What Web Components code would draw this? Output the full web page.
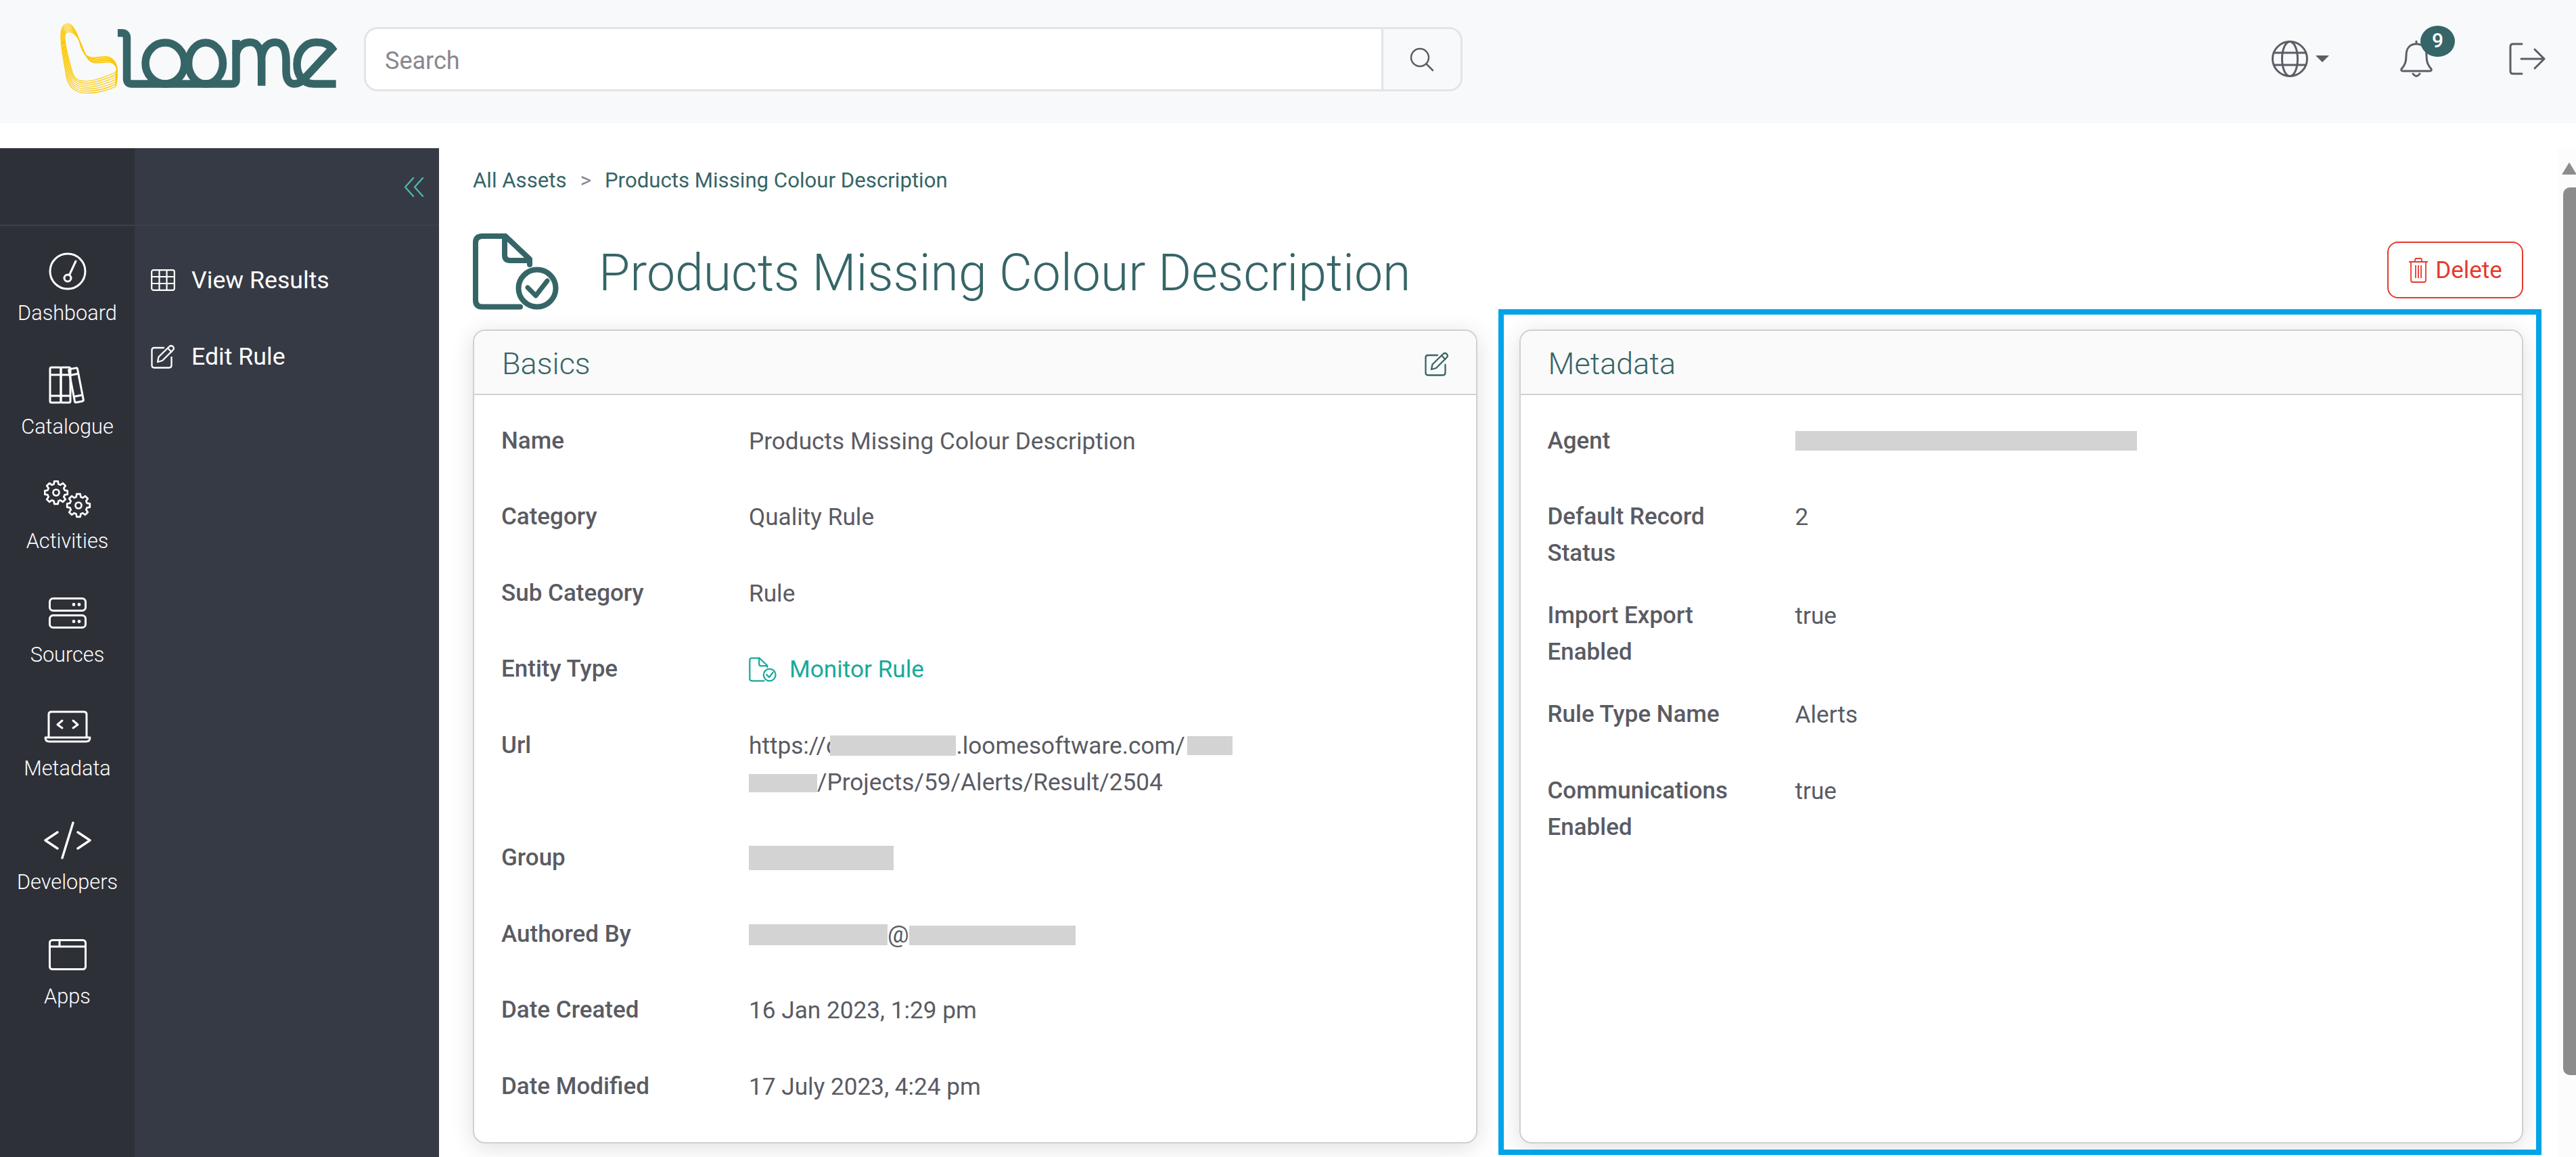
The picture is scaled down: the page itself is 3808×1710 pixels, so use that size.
<!DOCTYPE html>
<html>
<head>
<meta charset="utf-8">
<title>Loome</title>
<style>
html, body { margin: 0; height: 100%; background: #fff; overflow: hidden; }
body { font-family: Roboto, "Liberation Sans", sans-serif; }
</style>
</head>
<body>
<app-shell>
  <app-header slot="top"></app-header>
  <app-sidebar slot="side">
    <rail-item slot="rail" icon="gauge">Dashboard</rail-item>
    <rail-item slot="rail" icon="books">Catalogue</rail-item>
    <rail-item slot="rail" icon="gears">Activities</rail-item>
    <rail-item slot="rail" icon="server">Sources</rail-item>
    <rail-item slot="rail" icon="laptop">Metadata</rail-item>
    <rail-item slot="rail" icon="code">Developers</rail-item>
    <rail-item slot="rail" icon="window">Apps</rail-item>
    <menu-item icon="table">View Results</menu-item>
    <menu-item icon="edit">Edit Rule</menu-item>
  </app-sidebar>
  <asset-page slot="main">
    <info-card heading="Basics" slot="left" editable>
      <info-row label="Name">Products Missing Colour Description</info-row>
      <info-row label="Category">Quality Rule</info-row>
      <info-row label="Sub Category">Rule</info-row>
      <info-row label="Entity Type"><entity-link>Monitor Rule</entity-link></info-row>
      <info-row label="Url">https://c<red-act w="186" h="30" ml="-12" v="-3"></red-act>.loomesoftware.com/<red-act w="67" h="28" ml="3" v="-2"></red-act><br><red-act w="101" h="27" v="-3"></red-act>/Projects/59/Alerts/Result/2504</info-row>
      <info-row label="Group"><red-act w="214" h="36" v="-6"></red-act></info-row>
      <info-row label="Authored By"><red-act w="205" h="31" v="-4"></red-act>@<red-act w="246" h="29" v="-4"></red-act></info-row>
      <info-row label="Date Created">16 Jan 2023, 1:29 pm</info-row>
      <info-row label="Date Modified">17 July 2023, 4:24 pm</info-row>
    </info-card>
    <info-card heading="Metadata" slot="right">
      <info-row label="Agent"><red-act w="505" h="29" v="-2"></red-act></info-row>
      <info-row label="Default Record Status">2</info-row>
      <info-row label="Import Export Enabled">true</info-row>
      <info-row label="Rule Type Name">Alerts</info-row>
      <info-row label="Communications Enabled">true</info-row>
    </info-card>
  </asset-page>
  <scroll-bar slot="bar"></scroll-bar>
</app-shell>
<call-out></call-out>

<script>
'use strict';

const TEAL = '#366567';

// one gear outline, used twice in the activities icon
function gearPath(cx, cy, outer, inner, teeth) {
	let d = '';
	const step = Math.PI * 2 / teeth;
	for (let i = 0; i < teeth; i++) {
		const a = i * step;
		const pts = [[a - step * 0.34, inner], [a - step * 0.2, outer], [a + step * 0.2, outer], [a + step * 0.34, inner]];
		pts.forEach(([ang, r], j) => {
			const x = (cx + Math.cos(ang) * r).toFixed(1);
			const y = (cy + Math.sin(ang) * r).toFixed(1);
			d += (i === 0 && j === 0 ? 'M' : 'L') + x + ' ' + y + ' ';
		});
	}
	return d + 'Z';
}

// logo ribbon: contours blended between the outer and the inner outline
function ribbonLines() {
	const outer = [11,0, 4,0, .5,8, 1,22, 1.5,40, 6,58, 8,72, 10,92, 20,102, 38,102.5, 55,103, 72,98, 82,93, 84,85, 85,75, 84,67, 83,56, 76,48, 66,48.5, 58,49, 52,50.5, 47,50, 36,49, 32,40, 28,25, 24,12, 18,0, 11,0];
	const inner = [12,12, 8,12, 6,16, 7,24, 9,40, 14,58, 18,72, 21,82, 27,85, 38,85, 52,85, 70,77, 81,72.5, 83,70, 84,67, 83,65, 81,60, 78,57, 71,57, 63,57, 57,58.5, 51,58, 43,57, 39,50, 34,38, 29,25, 23,12, 12,12];
	let out = '';
	for (let i = 0; i < 7; i++) {
		const k = i / 6;
		const p = outer.map((v, n) => (v + (inner[n] - v) * k).toFixed(1));
		let d = `M${p[0]} ${p[1]}`;
		for (let n = 2; n < p.length; n += 6) {
			d += ` C${p[n]} ${p[n + 1]} ${p[n + 2]} ${p[n + 3]} ${p[n + 4]} ${p[n + 5]}`;
		}
		out += `<path d="${d}Z"/>`;
	}
	return out;
}

const ICONS = {
	gauge: `<svg width="56" height="56" viewBox="0 0 56 56" fill="none" stroke="#fff" stroke-width="3" stroke-linecap="round"><circle cx="28" cy="28" r="26"/><circle cx="28" cy="38" r="5"/><path d="M30.5 33.500 L40 13"/></svg>`,
	books: `<svg width="56" height="56" viewBox="0 0 56 56" fill="none" stroke="#fff" stroke-width="3" stroke-linejoin="round"><rect x="2" y="2" width="16" height="52" rx="2"/><rect x="18" y="2" width="14" height="52" rx="2"/><path d="M2 13H32M2 44H32"/><g transform="rotate(-11 42 28)"><rect x="34" y="3" width="13" height="50" rx="2"/><path d="M34 12H47M34 44H47"/></g></svg>`,
	gears: `<svg width="70" height="56" viewBox="0 0 70 56" fill="none" stroke="#fff" stroke-width="2.7" stroke-linejoin="round"><path d="${gearPath(18, 18, 17, 13, 8)}"/><circle cx="18" cy="18" r="4.500"/><path d="${gearPath(51, 37, 17, 13, 8)}"/><circle cx="51" cy="37" r="4.500"/></svg>`,
	server: `<svg width="56" height="46" viewBox="0 0 56 46" fill="none" stroke="#fff" stroke-width="3"><rect x="1.500" y="1.500" width="53" height="18" rx="5"/><rect x="1.500" y="26.500" width="53" height="18" rx="5"/><g fill="#fff" stroke="none"><circle cx="37" cy="10.500" r="2.400"/><circle cx="45" cy="10.500" r="2.400"/><circle cx="37" cy="35.500" r="2.400"/><circle cx="45" cy="35.500" r="2.400"/></g></svg>`,
	laptop: `<svg width="70" height="48" viewBox="0 0 70 48" fill="none" stroke="#fff" stroke-width="3" stroke-linecap="round" stroke-linejoin="round"><path d="M7 39V6Q7 2 11 2H59Q63 2 63 6V39"/><path d="M2 40H68Q68 46 62 46H8Q2 46 2 40Z"/><path d="M27 15L20 21L27 26M43 15L50 21L43 26"/></svg>`,
	code: `<svg width="70" height="56" viewBox="0 0 70 56" fill="none" stroke="#fff" stroke-width="3.400" stroke-linecap="round" stroke-linejoin="round"><path d="M20 16L2 28L20 40M50 16L68 28L50 40M43 2L27 54"/></svg>`,
	window: `<svg width="56" height="46" viewBox="0 0 56 46" fill="none" stroke="#fff" stroke-width="3"><rect x="1.500" y="1.500" width="53" height="43" rx="4"/><path d="M2 11H54M16 2V11"/></svg>`,
	table: `<svg width="36" height="32" viewBox="0 0 36 32" fill="none" stroke="#fff" stroke-width="2.200"><rect x="1.200" y="1.200" width="33.600" height="29.600" rx="2.500"/><path d="M1 11H35M1 21H35M12.500 1V31M23.500 1V31"/></svg>`,
	edit: `<svg width="36" height="36" viewBox="0 0 36 36" fill="none" stroke="currentColor" stroke-width="2.300" stroke-linecap="round" stroke-linejoin="round"><path d="M19 5H5Q1.500 5 1.500 8.500V31Q1.500 34.500 5 34.500H27Q30.500 34.500 30.500 31V19"/><path d="M10 26L11.500 18.500L27.500 3Q30 1 32.500 3Q35 5.500 33 8L17 24Z"/><path d="M25 5.500L30.500 11"/></svg>`
};

const shellTemplate = document.createElement('template');
shellTemplate.innerHTML = `
<style>
:host { display: flex; flex-direction: column; height: 1710px; width: 3808px; overflow: hidden; }
.body { display: flex; flex: 1; min-height: 0; margin-top: 37px; }
</style>
<slot name="top"></slot>
<div class="body">
  <slot name="side"></slot>
  <slot name="main"></slot>
  <slot name="bar"></slot>
</div>`;

class AppShell extends HTMLElement {
	constructor() {
		super();
		this.attachShadow({mode: 'open'}).appendChild(shellTemplate.content.cloneNode(true));
	}
}
customElements.define('app-shell', AppShell);

const headerTemplate = document.createElement('template');
headerTemplate.innerHTML = `
<style>
:host { display: flex; align-items: flex-start; height: 182px; background: #f8f9fb; box-sizing: border-box; flex: none; position: relative; }
.logo { margin: 35px 0 0 89px; width: 408px; height: 103px; flex: none; overflow: visible; }
.search { margin: 40px 0 0 41px; width: 1624px; height: 95px; box-sizing: border-box; display: flex; background: #fff; border: 3px solid #e2e4e8; border-radius: 20px; overflow: hidden; }
.search input { flex: 1; min-width: 0; border: 0; outline: 0; background: none; padding: 4px 0 0 28px; font: 400 36px Roboto, sans-serif; color: #333; }
.search input::placeholder { color: #88888e; opacity: 1; }
.search button { width: 117px; border: 0; border-left: 3px solid #e2e4e8; background: #f8f9fb; padding: 0; display: flex; align-items: center; justify-content: center; }
.tools { margin-left: auto; margin-right: 45px; display: flex; align-items: flex-start; }
.globe { margin-top: 60px; width: 54px; height: 54px; }
.caret { margin: 82px 0 0 11px; width: 0; height: 0; border-left: 10px solid transparent; border-right: 10px solid transparent; border-top: 10px solid #5c5e66; }
.bell { margin: 60px 0 0 105px; width: 48px; height: 54px; position: relative; }
.badge { position: absolute; left: 30px; top: -22px; width: 51px; height: 46px; border-radius: 50%; background: ${TEAL}; color: #fff; font: 500 30px/44px Roboto, sans-serif; text-align: center; }
.out { margin: 63px 0 0 113px; width: 54px; height: 48px; }
svg { display: block; }
</style>
<svg class="logo" viewBox="0 0 408 103" role="img" aria-label="Loome">
  <g fill="none" stroke="#fdc800" stroke-width="1.200">${ribbonLines()}</g>
  <g fill="none" stroke="${TEAL}" stroke-width="11.500">
    <path d="M85 13.700H91Q98.500 13.700 98.500 21V81Q98.500 89 106 89H254Q260 89 260 83V24"/>
    <ellipse cx="155" cy="58.500" rx="29" ry="30.500"/>
    <ellipse cx="215" cy="58.500" rx="25.500" ry="30.500"/>
    <path d="M260 46C262 34 270 27.500 281 27.500C292 27.500 297.700 38 297.700 55V91.700"/>
    <path d="M297.700 50C299 36 307 27.500 318 27.500C329 27.500 334 38 334 55V70C334 83 339 89 346 89C353 89 358 85 363 79"/>
    <path d="M407.700 89H375C358 89 350 75 350 60C350 42 362 27.500 378 27.500C388 27.500 396 29 402 37L362 80"/>
  </g>
</svg>
<div class="search">
  <input placeholder="Search">
  <button aria-label="Search"><svg width="36" height="36" viewBox="0 0 36 36" fill="none" stroke="#5c5e66" stroke-width="2.500" stroke-linecap="round"><circle cx="15" cy="15" r="13"/><path d="M24.500 24.500L34 34"/></svg></button>
</div>
<div class="tools">
  <svg class="globe" viewBox="0 0 54 54" fill="none" stroke="#5c5e66" stroke-width="3"><circle cx="27" cy="27" r="25.500"/><ellipse cx="27" cy="27" rx="11.500" ry="25.500"/><path d="M3 18H51M3 36H51"/></svg>
  <div class="caret"></div>
  <div class="bell">
    <svg width="48" height="54" viewBox="0 0 48 54" fill="none" stroke="#5c5e66" stroke-width="3" stroke-linecap="round" stroke-linejoin="round"><path d="M24 1V5M24 5C14 5 9 12 9 22C9 32 7 36 2 42Q1 45 4 45H44Q47 45 46 42C41 36 39 32 39 22C39 12 34 5 24 5Z"/><path d="M19 49Q24 56 29 49"/></svg>
    <div class="badge">9</div>
  </div>
  <svg class="out" viewBox="0 0 54 48" fill="none" stroke="#5c5e66" stroke-width="3" stroke-linecap="round" stroke-linejoin="round"><path d="M19 2H6Q2 2 2 6V42Q2 46 6 46H19"/><path d="M18 24H52M38 10L52 24L38 38"/></svg>
</div>`;

class AppHeader extends HTMLElement {
	constructor() {
		super();
		this.attachShadow({mode: 'open'}).appendChild(headerTemplate.content.cloneNode(true));
	}
}
customElements.define('app-header', AppHeader);

const sidebarTemplate = document.createElement('template');
sidebarTemplate.innerHTML = `
<style>
:host { display: flex; flex: none; width: 649px; height: 100%; background: #363a44; }
.rail { width: 199px; background: #2e3038; flex: none; }
.panel { flex: 1; }
.top { height: 113px; border-bottom: 2px solid #3d3f49; box-sizing: content-box; display: flex; justify-content: flex-end; }
.top svg { margin: 43px 22px 0 0; }
.items { padding-top: 32px; }
.menu { padding-top: 23px; }
</style>
<div class="rail">
  <div class="top"></div>
  <div class="items"><slot name="rail"></slot></div>
</div>
<div class="panel">
  <div class="top"><svg width="30" height="29" viewBox="0 0 30 29" fill="none" stroke="#4db6ac" stroke-width="2.400" stroke-linecap="round" stroke-linejoin="round"><path d="M14 1L2 14.500L14 28M28 1L16 14.500L28 28"/></svg></div>
  <div class="menu"><slot></slot></div>
</div>`;

class AppSidebar extends HTMLElement {
	constructor() {
		super();
		this.attachShadow({mode: 'open'}).appendChild(sidebarTemplate.content.cloneNode(true));
	}
}
customElements.define('app-sidebar', AppSidebar);

class RailItem extends HTMLElement {
	constructor() {
		super();
		const shadow = this.attachShadow({mode: 'open'});
		shadow.innerHTML = `
<style>
:host { display: block; height: 168.3px; text-align: center; color: #fff; font: 300 30.7px/50px Roboto, sans-serif; }
.ic { height: 70px; margin-bottom: 2px; display: flex; align-items: center; justify-content: center; }
svg { display: block; }
</style>
<div class="ic">${ICONS[this.getAttribute('icon')]}</div>
<slot></slot>`;
	}
}
customElements.define('rail-item', RailItem);

class MenuItem extends HTMLElement {
	constructor() {
		super();
		const shadow = this.attachShadow({mode: 'open'});
		shadow.innerHTML = `
<style>
:host { display: flex; align-items: center; height: 113px; padding-left: 24px; color: #fff; font: 400 35.7px Roboto, sans-serif; }
.ic { width: 60px; flex: none; display: flex; }
svg { display: block; }
</style>
<span class="ic">${ICONS[this.getAttribute('icon')]}</span>
<slot></slot>`;
	}
}
customElements.define('menu-item', MenuItem);

// the document-with-tick icon sits in the title and in the entity link
const RULE_ICON = `<path d="M70 108.500H14Q4 108.500 4 98.500V14Q4 4 14 4H48L84 38V46"/><path d="M47 4V32Q47 40 55 40H84"/><circle cx="95" cy="81" r="27.500"/><path d="M81 80L93 92L110 70" stroke-width="7"/>`;

const pageTemplate = document.createElement('template');
pageTemplate.innerHTML = `
<style>
:host { display: flex; flex-direction: column; flex: 1; min-width: 0; box-sizing: border-box; padding: 24px 51px 20px 50px; }
.crumbs { height: 48px; font: 400 31.2px/48px Roboto, sans-serif; color: ${TEAL}; white-space: pre; }
.crumbs i { font-style: normal; color: #88888e; margin: 0 20px 0 20px; }
.title { display: flex; align-items: center; height: 141px; margin-top: 40px; margin-bottom: 15px; }
.title svg { display: block; flex: none; }
h1 { margin: 4px 0 0 59px; font: 300 75.2px/1.2 Roboto, sans-serif; color: ${TEAL}; }
.del { margin: -5px 0 0 auto; box-sizing: border-box; width: 201px; height: 84px; display: flex; align-items: center; justify-content: center; gap: 10px; background: #fff; border: 2.5px solid #e63a2e; border-radius: 16px; color: #e63a2e; font: 400 35px Roboto, sans-serif; padding: 0; }
.cols { flex: 1; min-height: 0; display: grid; grid-template-columns: 1fr 1fr; column-gap: 62px; }
</style>
<div class="crumbs">All Assets<i>&gt;</i>Products Missing Colour Description</div>
<div class="title">
  <svg width="127" height="113" viewBox="0 0 127 113" fill="none" stroke="${TEAL}" stroke-width="8" stroke-linejoin="round" stroke-linecap="round">${RULE_ICON}</svg>
  <h1>Products Missing Colour Description</h1>
  <button class="del"><svg width="30" height="37" viewBox="0 0 30 37" fill="none" stroke="#e63a2e" stroke-width="1.800" stroke-linejoin="round"><path d="M1 6H29M10 6V3Q10 1 12 1H18Q20 1 20 3V6M4 6V33Q4 36 7 36H23Q26 36 26 33V6M11 11V30M15 11V30M19 11V30"/></svg>Delete</button>
</div>
<div class="cols">
  <slot name="left"></slot>
  <slot name="right"></slot>
</div>`;

class AssetPage extends HTMLElement {
	constructor() {
		super();
		this.attachShadow({mode: 'open'}).appendChild(pageTemplate.content.cloneNode(true));
	}
}
customElements.define('asset-page', AssetPage);

class InfoCard extends HTMLElement {
	constructor() {
		super();
		const shadow = this.attachShadow({mode: 'open'});
		const pencil = this.hasAttribute('editable')
			? `<span class="pen">${ICONS.edit}</span>` : '';
		shadow.innerHTML = `
<style>
:host { display: flex; flex-direction: column; box-sizing: border-box; background: #fff; border: 2.5px solid #d0d0d0; border-radius: 18px; box-shadow: 0 6px 34px rgba(0,0,0,.13); overflow: hidden; }
header { flex: none; height: 95px; box-sizing: border-box; display: flex; align-items: center; justify-content: space-between; padding: 4px 40px 0 41px; background: #fafafa; border-bottom: 2.5px solid #d0d0d0; color: ${TEAL}; font: 300 45px Roboto, sans-serif; }
.pen { display: flex; color: ${TEAL}; }
.pen svg { display: block; }
main { padding: 40.5px 40px 0; }
</style>
<header><span>${this.getAttribute('heading')}</span>${pencil}</header>
<main><slot></slot></main>`;
	}
}
customElements.define('info-card', InfoCard);

class InfoRow extends HTMLElement {
	constructor() {
		super();
		const shadow = this.attachShadow({mode: 'open'});
		shadow.innerHTML = `
<style>
:host { display: flex; font: 400 35.2px/54px Roboto, sans-serif; color: #5a5b63; }
.k { width: 366px; flex: none; box-sizing: border-box; padding: 0 40px 38px 0; font-size: 35px; font-weight: 500; }
.v { flex: 1; min-width: 0; padding-bottom: 58.5px; }
</style>
<div class="k">${this.getAttribute('label')}</div>
<div class="v"><slot></slot></div>`;
	}
}
customElements.define('info-row', InfoRow);

class EntityLink extends HTMLElement {
	constructor() {
		super();
		const shadow = this.attachShadow({mode: 'open'});
		shadow.innerHTML = `
<style>
:host { display: flex; align-items: center; gap: 19px; height: 54px; color: #1aa99b; }
svg { display: block; }
</style>
<svg width="41" height="37" viewBox="0 0 127 113" fill="none" stroke="#1aa99b" stroke-width="7" stroke-linejoin="round" stroke-linecap="round">${RULE_ICON}</svg>
<slot></slot>`;
	}
}
customElements.define('entity-link', EntityLink);

// grey block that hides private values
class RedAct extends HTMLElement {
	constructor() {
		super();
		const shadow = this.attachShadow({mode: 'open'});
		shadow.innerHTML = `
<style>
:host { display: inline-block; background: #d3d3d3; vertical-align: baseline; }
</style>`;
	}

	connectedCallback() {
		this.style.width = this.getAttribute('w') + 'px';
		this.style.height = this.getAttribute('h') + 'px';
		this.style.marginLeft = (this.getAttribute('ml') || 0) + 'px';
		this.style.verticalAlign = (this.getAttribute('v') || 0) + 'px';
	}
}
customElements.define('red-act', RedAct);

const barTemplate = document.createElement('template');
barTemplate.innerHTML = `
<style>
:host { display: block; flex: none; width: 27px; height: 100%; background: #fcfcfc; position: relative; box-sizing: border-box; padding: 21px 0 0 6px; }
.up { width: 0; height: 0; margin: 0 0 19px 0; border-left: 11px solid transparent; border-right: 11px solid transparent; border-bottom: 18px solid #8c8c8c; }
.thumb { width: 19px; margin-left: 2px; height: 1312px; background: #8c8c8c; border-radius: 10px 0 0 10px; }
</style>
<div class="up"></div>
<div class="thumb"></div>`;

class ScrollBar extends HTMLElement {
	constructor() {
		super();
		this.attachShadow({mode: 'open'}).appendChild(barTemplate.content.cloneNode(true));
	}
}
customElements.define('scroll-bar', ScrollBar);

// blue highlight drawn over the metadata card
class CallOut extends HTMLElement {
	constructor() {
		super();
		this.attachShadow({mode: 'open'}).innerHTML = `
<style>
:host { position: absolute; left: 2215px; top: 457px; width: 1542px; height: 1250px; box-sizing: border-box; border: 8px solid #00a4e8; pointer-events: none; }
</style>`;
	}
}
customElements.define('call-out', CallOut);
</script>
</body>
</html>
